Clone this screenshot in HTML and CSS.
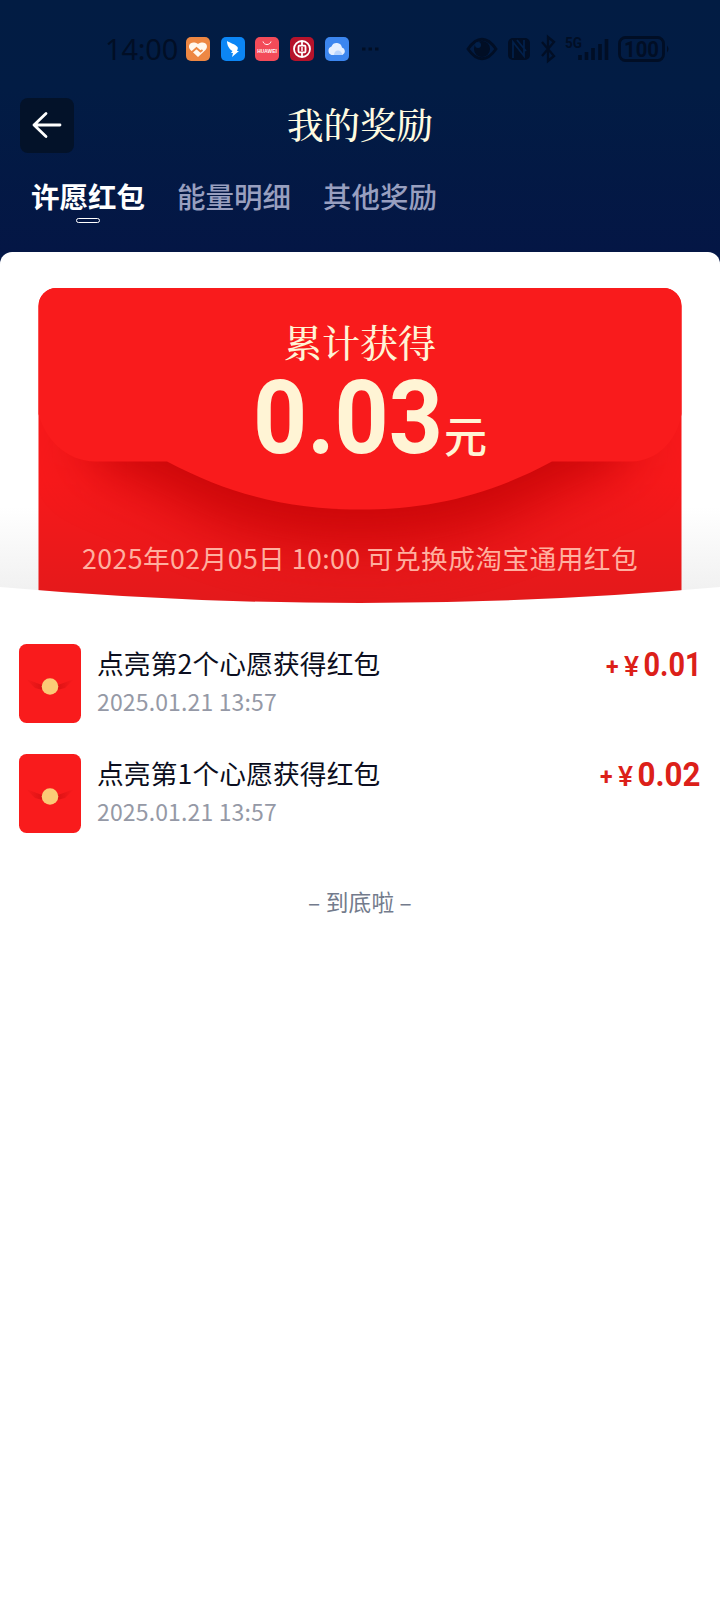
FILE: index.html
```html
<!DOCTYPE html>
<html lang="zh-CN">
<head>
<meta charset="utf-8">
<title>我的奖励</title>
<link rel="stylesheet" href="styles.css">
</head>
<body>
<header class="header">
  <div class="status">
    <div class="status-left">
      <span class="clock">14:00</span>
      <svg class="app" viewBox="0 0 24 24"><rect width="24" height="24" rx="5" fill="#ed8743"/><path d="M12 20 4.500 13C.5 9 5 2.500 12 7c7-4.500 11.500 2 7.500 6z" fill="#fff8ef"/><path d="m5.500 15.500 5-4.500 4 3.500 2-1.500" fill="none" stroke="#ed8743" stroke-width="1.800"/></svg>
      <svg class="app" viewBox="0 0 24 24"><rect width="24" height="24" rx="5" fill="#0c86f5"/><path d="M6 4c3 2 8 3 10.500 6 1 1.500-.5 3-.5 4h2l-7 6 1-4h-2l1.500-2C8 12 6 8 6 4z" fill="#fff"/></svg>
      <svg class="app" viewBox="0 0 24 24"><rect width="24" height="24" rx="5" fill="#f34b59"/><path d="M8 4.500c1 4 7 4 8 0" fill="none" stroke="#fff" stroke-width="1"/><text class="huawei" x="2.200" y="15.800" textLength="19.600">HUAWEI</text></svg>
      <svg class="app" viewBox="0 0 24 24"><rect width="24" height="24" rx="5" fill="#b6132b"/><g fill="none" stroke="#fff" stroke-width="1.800"><circle cx="12" cy="12" r="8"/><rect x="8.500" y="8.700" width="7" height="6.600" rx="1"/><path d="M12 4v5M12 15v5"/></g><path d="M12 10v4" stroke="#fff" stroke-width="1.500"/></svg>
      <svg class="app" viewBox="0 0 24 24"><rect width="24" height="24" rx="5" fill="#3c86ef"/><path d="M6.500 18a4.500 4.500 0 0 1 0-8.500 5.500 5.500 0 0 1 10.500 1A4 4 0 0 1 17.500 18z" fill="#e5efff"/><path d="M9 18c0-4 4-6 7-3l2 3z" fill="#b9d5ff"/></svg>
      <svg class="more" viewBox="0 0 20 6"><path d="M1 3h3.500M7.500 3H11M14 3h3.500" stroke="#010e25" stroke-width="3"/></svg>
    </div>
    <svg class="status-right" viewBox="0 0 210 32">
      <g fill="none" stroke="#010e25" stroke-width="2.800">
        <path d="M3 16C12 3 22 3 31 16 22 29 12 29 3 16z"/>
        <path d="m77 9 12 14-6 5V4l6 5-12 14" stroke-width="2.300"/>
        <rect x="154.500" y="4.500" width="44" height="23" rx="6"/>
      </g>
      <circle cx="17" cy="16" r="8" fill="#010e25"/><circle cx="13" cy="12" r="3" fill="#02204a"/>
      <rect x="43" y="5" width="22" height="22" rx="5" fill="#010e25"/>
      <path d="M48 25V9l11 14V7M52 7l9 11" fill="none" stroke="#02204a" stroke-width="1.800"/>
      <path d="M115 27v-5M121.500 27v-8M128 27V15M135 27V11M141.500 27V6" stroke="#010e25" stroke-width="3.600"/>
      <path d="M202 12.500q3 3.500 0 7z" fill="#010e25"/>
      <text class="net" x="100" y="15" textLength="17" lengthAdjust="spacingAndGlyphs">5G</text>
      <text class="battery" x="159" y="24" textLength="35" lengthAdjust="spacingAndGlyphs">100</text>
    </svg>
  </div>
  <div class="titlebar">
    <div class="back"><svg viewBox="0 0 54 55"><path d="M40 27H14M26 15.500 14 27l12 11.500" fill="none" stroke="#fff" stroke-width="2.800" stroke-linecap="round" stroke-linejoin="round"/></svg></div>
    <h1 class="title">我的奖励</h1>
  </div>
  <nav class="tabs">
    <span class="tab tab-active">许愿红包</span>
    <span class="tab">能量明细</span>
    <span class="tab">其他奖励</span>
  </nav>
</header>
<main class="sheet">
  <section class="hero">
    <svg class="hero-art" viewBox="0 0 720 358">
      <defs>
        <linearGradient id="floor" x1="0" y1="0" x2="0" y2="1"><stop offset="0" stop-color="#fff"/><stop offset="1" stop-color="#eee"/></linearGradient>
        <linearGradient id="body" x1="0" y1="0" x2="0" y2="1"><stop offset=".6" stop-color="#f7191b"/><stop offset="1" stop-color="#e2191b"/></linearGradient>
        <filter id="soft" x="-20%" y="-30%" width="140%" height="180%" color-interpolation-filters="sRGB"><feGaussianBlur stdDeviation="26"/></filter>
        <clipPath id="stage"><path d="M0 0H720V335Q540 351 360 351T0 335z"/></clipPath>
        <clipPath id="card"><path d="M38.500 36h643v322h-643z"/></clipPath>
      </defs>
      <g clip-path="url(#stage)">
        <rect y="255" width="720" height="100" fill="url(#floor)"/>
        <path d="M38.500 54a18 18 0 0 1 18-18h607a18 18 0 0 1 18 18v304h-643z" fill="url(#body)"/>
        <g clip-path="url(#card)"><path d="M90 120h540v90l-80 34C500 278 430 293 360 293S220 278 170 244l-80-34z" fill="#cc0709" filter="url(#soft)"/></g>
        <path d="M38.500 54a18 18 0 0 1 18-18h607a18 18 0 0 1 18 18V162C677 190 656 209 632 209.500H552C490 243 430 257.500 360 257.500S230 243 167 209.500H95C66 209 45 187 38.500 162z" fill="#f91b1c"/>
      </g>
    </svg>
    <div class="hero-text">
      <div class="sum-label">累计获得</div>
      <div class="sum">
        <svg class="sum-number" viewBox="0 0 190 80"><text class="digits digits-large" x="-1" y="76" textLength="190" lengthAdjust="spacingAndGlyphs">0.03</text></svg>
        <span class="yuan">元</span>
      </div>
      <div class="note">2025年02月05日 10:00 可兑换成淘宝通用红包</div>
    </div>
  </section>
  <section class="list">
    <div class="row">
      <svg class="packet" viewBox="0 0 62 79"><defs><linearGradient id="fold"><stop offset="0" stop-color="#f91b1c"/><stop offset=".5" stop-color="#d00e10"/><stop offset="1" stop-color="#f91b1c"/></linearGradient></defs><rect width="62" height="79" rx="7.500" fill="#f91b1c"/><path d="m7 35 24 9 24-9-9 9-15 4-15-4z" fill="url(#fold)"/><circle cx="31" cy="42.500" r="8.300" fill="#fbcb76"/></svg>
      <div class="info"><div class="name">点亮第2个心愿获得红包</div><div class="time">2025.01.21 13:57</div></div>
      <svg class="amount" viewBox="0 0 106 36"><text class="digits plus" x="12" y="28">+</text><text class="digits yen" x="30" y="29" textLength="15" lengthAdjust="spacingAndGlyphs">¥</text><text class="digits value" x="49.500" y="29" textLength="58" lengthAdjust="spacingAndGlyphs">0.01</text></svg>
    </div>
    <div class="row">
      <svg class="packet" viewBox="0 0 62 79"><rect width="62" height="79" rx="7.500" fill="#f91b1c"/><path d="m7 35 24 9 24-9-9 9-15 4-15-4z" fill="url(#fold)"/><circle cx="31" cy="42.500" r="8.300" fill="#fbcb76"/></svg>
      <div class="info"><div class="name">点亮第1个心愿获得红包</div><div class="time">2025.01.21 13:57</div></div>
      <svg class="amount" viewBox="0 0 106 36"><text class="digits plus" x="6" y="28">+</text><text class="digits yen" x="24" y="29" textLength="15" lengthAdjust="spacingAndGlyphs">¥</text><text class="digits value" x="43.500" y="29" textLength="63" lengthAdjust="spacingAndGlyphs">0.02</text></svg>
    </div>
  </section>
  <div class="end">– 到底啦 –</div>
</main>
</body>
</html>
```
FILE: styles.css
```css
*, *::after { box-sizing: border-box; }
body {
  margin: 0;
  width: 720px;
  min-height: 1600px;
  background: #041848;
  font-family: "Noto Sans CJK SC", sans-serif;
}
svg { display: block; flex: none; }
.header {
  height: 252px;
  background: linear-gradient(#021c43, #021c44 35%, #041645);
}
.status {
  height: 98px;
  display: flex;
  justify-content: space-between;
  align-items: flex-start;
  padding: 32px 47px 0 105px;
}
.status-left { display: flex; align-items: center; height: 34px; }
.clock {
  width: 81px;
  font: 29px/34px "Noto Sans", sans-serif;
  letter-spacing: -0.2px;
  color: #010e25;
}
.app { width: 24px; height: 24px; margin-right: 10.700px; }
.more { width: 20px; height: 6px; margin-left: 2px; }
.huawei { font: bold 4.800px "Liberation Sans", sans-serif; fill: #fff; }
.status-right { width: 210px; height: 32px; margin-top: 1px; margin-right: -2px; }
.net { font: bold 14px Roboto, sans-serif; fill: #010e25; }
.battery { font: bold 22px Roboto, sans-serif; fill: #010e25; }
.titlebar {
  display: grid;
  grid-template-columns: 54px 1fr 54px;
  padding: 0 20px;
  height: 56px;
}
.back { width: 54px; height: 55px; border-radius: 8px; background: #031229; }
.title {
  margin: 0;
  text-align: center;
  font: 500 36.500px/51px "Noto Serif CJK SC", "Noto Sans CJK SC", serif;
  color: #fffbe0;
}
.tabs { display: flex; gap: 32px; padding: 21px 0 0 31px; }
.tab {
  display: flex;
  flex-direction: column;
  align-items: center;
  font-size: 28.500px;
  line-height: 42px;
  font-weight: 500;
  color: #989fbf;
}
.tab-active { color: #fff; font-weight: 700; }
.tab-active::after {
  content: "";
  width: 24px;
  height: 5px;
  margin-top: 1px;
  border: 1.500px solid #fff;
  border-radius: 3px;
}
.sheet { height: 1348px; background: #fff; border-radius: 12px 12px 0 0; overflow: hidden; }
.hero { display: grid; height: 358px; }
.hero-art, .hero-text { grid-area: 1 / 1; width: 720px; height: 358px; }
.hero-text {
  z-index: 1;
  display: flex;
  flex-direction: column;
  align-items: center;
  padding-top: 62px;
  color: #fff4d5;
}
.sum-label { font: 500 38px/54px "Noto Serif CJK SC", "Noto Sans CJK SC", serif; }
.sum { display: flex; align-items: flex-end; height: 90px; padding-left: 21px; }
.sum-number { width: 190px; height: 80px; margin-bottom: 1px; overflow: visible; }
.digits { font-family: Roboto, sans-serif; font-weight: 700; }
.digits-large { font-size: 102px; fill: #fff4d5; }
.yuan { margin-bottom: 4px; font-size: 43px; line-height: 40px; font-weight: 500; }
.note {
  margin-top: 80px;
  font-size: 26.700px;
  line-height: 40px;
  letter-spacing: 0.430px;
  color: #ffaf9f;
  white-space: nowrap;
}
.list { padding: 34px 20px 0 19px; }
.row { display: flex; height: 109.500px; }
.packet { width: 62px; height: 79px; }
.info { flex: 1; padding-left: 16px; }
.name { font-size: 26.700px; line-height: 38px; letter-spacing: 0.150px; color: #0b0e20; }
.time { font-size: 23px; line-height: 39px; letter-spacing: 0.150px; color: #9599a6; }
.amount { width: 106px; height: 36px; margin-top: 3px; overflow: visible; }
.amount .digits { fill: #dc2019; }
.value { font-size: 34px; }
.amount .yen { font-size: 28px; font-weight: 500; }
.plus { font-size: 23px; }
.end {
  margin-top: 22px;
  text-align: center;
  font-size: 22.700px;
  line-height: 34px;
  letter-spacing: 0.200px;
  color: #737b8c;
}
```
